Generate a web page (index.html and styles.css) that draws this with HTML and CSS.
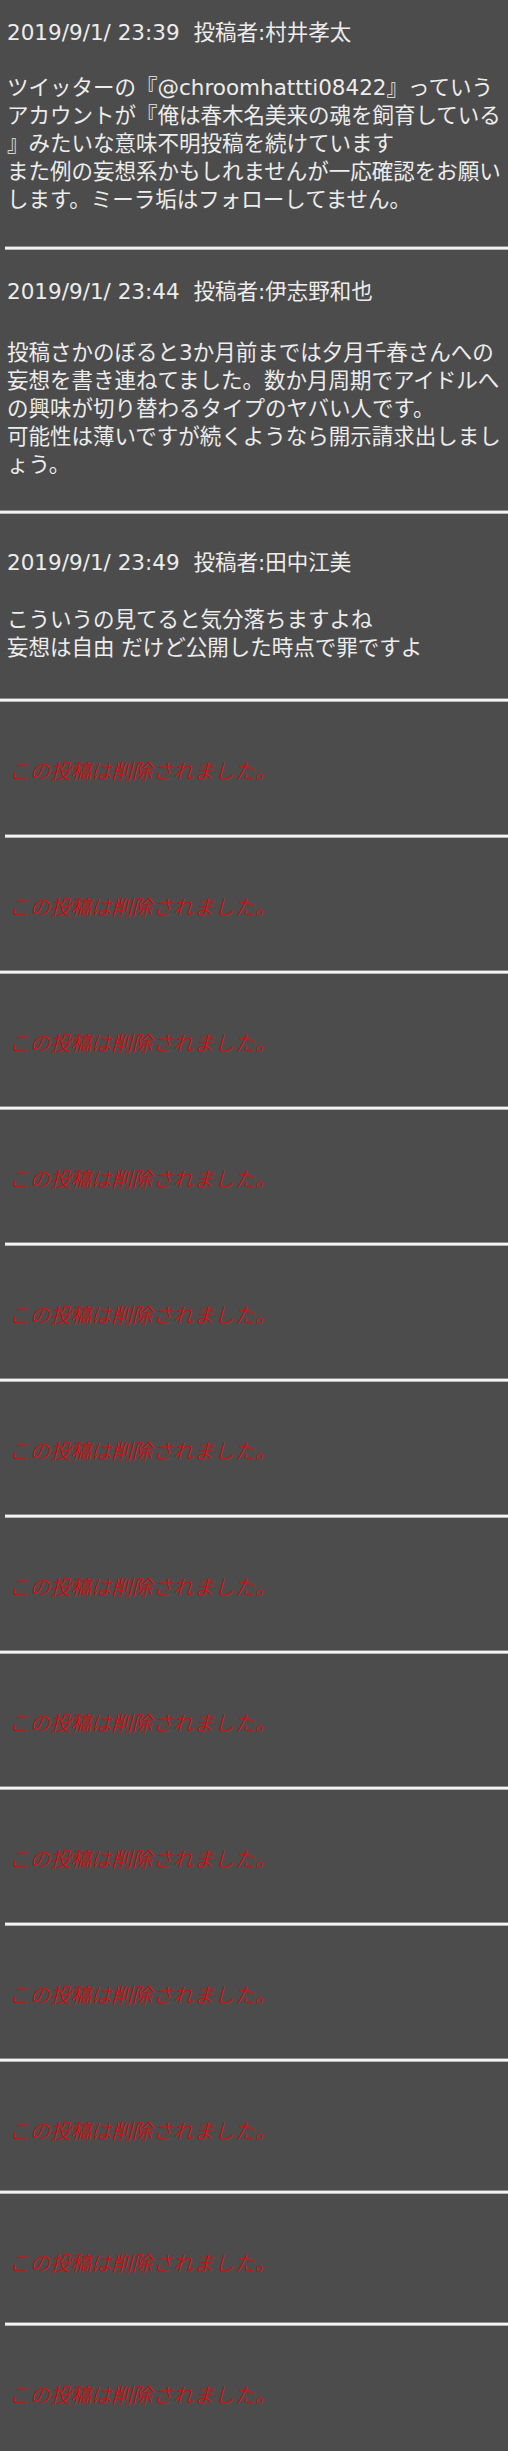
FILE: index.html
```html
<!DOCTYPE html>
<html lang="ja">
<head>
<meta charset="utf-8">
<title>投稿一覧</title>
<link rel="stylesheet" href="styles.css">
</head>
<body>
<main class="thread">
  <article class="post post--first">
    <p class="post__meta"><span class="post__date">2019/9/1/ 23:39</span><span class="post__author">投稿者:村井孝太</span></p>
    <p class="post__body">ツイッターの『@chroomhattti08422』っていう<br>アカウントが『俺は春木名美来の魂を飼育している<br>』みたいな意味不明投稿を続けています<br>また例の妄想系かもしれませんが一応確認をお願い<br>します。ミーラ垢はフォローしてません。</p>
  </article>
  <div class="rule rule--inset"></div>
  <article class="post post--second">
    <p class="post__meta"><span class="post__date">2019/9/1/ 23:44</span><span class="post__author">投稿者:伊志野和也</span></p>
    <p class="post__body">投稿さかのぼると3か月前までは夕月千春さんへの<br>妄想を書き連ねてました。数か月周期でアイドルへ<br>の興味が切り替わるタイプのヤバい人です。<br>可能性は薄いですが続くようなら開示請求出しまし<br>ょう。</p>
  </article>
  <div class="rule"></div>
  <article class="post post--third">
    <p class="post__meta"><span class="post__date">2019/9/1/ 23:49</span><span class="post__author">投稿者:田中江美</span></p>
    <p class="post__body">こういうの見てると気分落ちますよね<br>妄想は自由 だけど公開した時点で罪ですよ</p>
  </article>
  <div class="rule"></div>
  <article class="deleted"><p class="deleted__text">この投稿は削除されました。</p></article>
  <div class="rule rule--inset"></div>
  <article class="deleted"><p class="deleted__text">この投稿は削除されました。</p></article>
  <div class="rule"></div>
  <article class="deleted"><p class="deleted__text">この投稿は削除されました。</p></article>
  <div class="rule"></div>
  <article class="deleted"><p class="deleted__text">この投稿は削除されました。</p></article>
  <div class="rule rule--inset"></div>
  <article class="deleted"><p class="deleted__text">この投稿は削除されました。</p></article>
  <div class="rule"></div>
  <article class="deleted"><p class="deleted__text">この投稿は削除されました。</p></article>
  <div class="rule rule--inset"></div>
  <article class="deleted"><p class="deleted__text">この投稿は削除されました。</p></article>
  <div class="rule"></div>
  <article class="deleted"><p class="deleted__text">この投稿は削除されました。</p></article>
  <div class="rule"></div>
  <article class="deleted"><p class="deleted__text">この投稿は削除されました。</p></article>
  <div class="rule rule--inset"></div>
  <article class="deleted"><p class="deleted__text">この投稿は削除されました。</p></article>
  <div class="rule"></div>
  <article class="deleted deleted--short"><p class="deleted__text">この投稿は削除されました。</p></article>
  <div class="rule"></div>
  <article class="deleted deleted--short"><p class="deleted__text">この投稿は削除されました。</p></article>
  <div class="rule rule--inset"></div>
  <article class="deleted deleted--last"><p class="deleted__text">この投稿は削除されました。</p></article>
</main>
</body>
</html>
```

FILE: styles.css
```css
html {
  background: #4c4c4c;
}

body {
  margin: 0;
  background: #4c4c4c;
  font-family: "DejaVu Sans", "Noto Sans CJK JP", sans-serif;
  font-size: 21.5px;
  line-height: 28px;
  color: #ececec;
}

.thread {
  display: flex;
  flex-direction: column;
}

.post {
  padding: 28px 7px 31px 7px;
}

.post p,
.deleted p {
  margin: 0;
  white-space: nowrap;
}

.post__meta {
  display: flex;
}

.post__author {
  margin-left: 14px;
}

.post__body {
  margin-top: 30px !important;
}

.post--first {
  padding-top: 19px;
  padding-bottom: 32px;
}

.post--first .post__body {
  margin-top: 27px !important;
}

.post--second .post__body {
  margin-top: 33px !important;
}

.post--third {
  padding-top: 35px;
  padding-bottom: 36px;
}

.post--third .post__body {
  margin-top: 29px !important;
}

.rule {
  height: 2px;
  border-top: 1px solid #8f8f8f;
  border-bottom: 1px solid #b9b9b9;
  background: #f3f3f3;
}

.rule--inset {
  margin-left: 5px;
}

.deleted {
  padding: 54px 9px 50px 9px;
}

.deleted--short {
  padding-bottom: 46px;
}

.deleted--last {
  padding-bottom: 43px;
}

.deleted__text {
  font-family: "Noto Sans CJK JP", sans-serif;
  font-size: 20.5px;
  font-weight: 300;
  font-style: italic;
  color: #e80000;
}
```
